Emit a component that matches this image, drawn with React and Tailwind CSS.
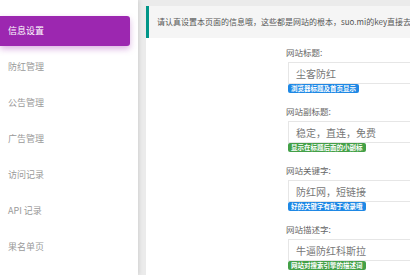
import React from 'react';

const menu = ['信息设置', '防红管理', '公告管理', '广告管理', '访问记录', 'API 记录', '果名单页'];

const fields = [
  { label: '网站标题:', value: '尘客防红', tip: '浏览器标题及首页显示', color: 'bg-[#1e88e5]' },
  { label: '网站副标题:', value: '稳定，直连，免费', tip: '显示在标题后面的小副标', color: 'bg-[#43a047]' },
  { label: '网站关键字:', value: '防红网，短链接', tip: '好的关键字有助于收录哦', color: 'bg-[#1e88e5]' },
  { label: '网站描述字:', value: '牛逼防红科斯拉', tip: '网站对搜索引擎的描述词', color: 'bg-[#43a047]' },
];

const App = () => {
  return (
    <div className="flex w-[410px] h-[275px] overflow-hidden bg-[#ebebeb] font-['Noto_Sans_CJK_SC','Noto_Sans',sans-serif]">
      {/* Sidebar */}
      <aside className="w-[138px] shrink-0 h-full bg-white pt-[13px] shadow-[1px_0_4px_rgba(0,0,0,0.12)] z-10">
        {menu.map((item, i) => (
          <div key={item} className="h-[36px] flex items-center">
            {i === 0 ? (
              <div className="w-[130px] h-[30px] flex items-center pl-[8px] bg-[#9c27b0] rounded-r-[3px] text-white text-[9px] shadow-[0_3px_6px_rgba(156,39,176,0.35)]">
                {item}
              </div>
            ) : (
              <div className="pl-[8px] text-[9px] text-[#9a9a9a]">{item}</div>
            )}
          </div>
        ))}
      </aside>

      {/* Content */}
      <main className="flex-1 min-w-0 pt-[6px] pl-[8px] flex flex-col">
        <div className="shrink-0 h-[32px] flex items-center border-l-[3px] border-[#009688] bg-[#f5f5f5] pl-[8px] text-[8px] text-[#555] whitespace-nowrap overflow-hidden">
          请认真设置本页面的信息哦，这些都是网站的根本，suo.mi的key直接去
        </div>
        <div className="flex-1 min-h-0 bg-white pt-[8px] pl-[142px] overflow-hidden">
          {fields.map((f) => (
            <div key={f.label} className="mb-[12px]">
              <div className="h-[12px] leading-[12px] text-[8.5px] text-[#666] mb-[4px] -ml-[2px]">{f.label}</div>
              <div className="w-[200px] h-[22px] border border-[#e6e6e6] flex items-center pl-[7px] text-[10px] text-[#777] whitespace-nowrap">
                {f.value}
              </div>
              <div className="h-[9px] flex">
                <span className={`${f.color} text-white text-[6.5px] font-bold leading-[9px] px-[3px] rounded-[2px] whitespace-nowrap`}>
                  {f.tip}
                </span>
              </div>
            </div>
          ))}
        </div>
      </main>
    </div>
  );
};

export default App;
